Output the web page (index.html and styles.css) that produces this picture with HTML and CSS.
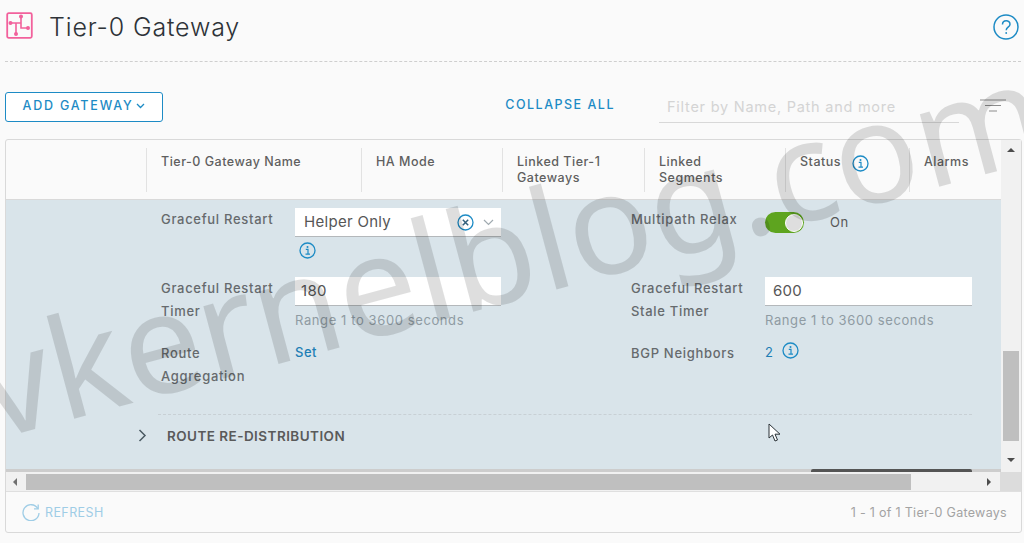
FILE: index.html
```html
<!DOCTYPE html>
<html lang="en">
<head>
<meta charset="utf-8">
<title>Tier-0 Gateway</title>
<link rel="stylesheet" href="styles.css">
</head>
<body>
<div class="page">
  <header class="title-bar">
    <div class="title-left">
      <svg class="logo" width="28" height="28" viewBox="0 0 28 28" fill="none" stroke="#f2619c" stroke-width="1.6">
        <rect x="1.2" y="1.2" width="24.6" height="24.6" rx="1.5" stroke-width="1.8"/>
        <path d="M4.500 11h10.500M10 11v11M15 4.500v11.500h7"/>
        <circle cx="4.500" cy="11" r="1.200" fill="#f2619c"/><circle cx="10" cy="22" r="1.200" fill="#f2619c"/><circle cx="15" cy="4.500" r="1.200" fill="#f2619c"/><circle cx="22" cy="16" r="1.200" fill="#f2619c"/>
      </svg>
      <h1 class="title">Tier-0 Gateway</h1>
    </div>
    <svg class="help" width="26" height="26" viewBox="0 0 26 26" fill="none" stroke="#1d8bc5" stroke-width="1.5">
      <circle cx="13" cy="13" r="12"/>
      <path d="M9.500 10.500c0-5 7.500-4.800 7.500-.3 0 3-3.800 3-3.800 6"/>
      <circle cx="13.200" cy="19" r=".9" fill="#1d8bc5" stroke="none"/>
    </svg>
  </header>

  <div class="toolbar">
    <button class="add-btn">ADD GATEWAY
      <svg width="9" height="6" viewBox="0 0 9 6" fill="none" stroke="#1d8bc5" stroke-width="1.3"><path d="M1 1l3.500 3.500L8 1"/></svg>
    </button>
    <div class="toolbar-right">
      <span class="collapse">COLLAPSE ALL</span>
      <div class="filter">Filter by Name, Path and more</div>
      <svg class="filter-icon" width="26" height="14" viewBox="0 0 26 14" stroke="#8c8c8c" stroke-width="1.2">
        <path d="M0 1h26M5 6.500h16M9 12h8"/>
      </svg>
    </div>
  </div>

  <section class="card">
    <div class="grid-area">
      <div class="grid-main">
        <div class="head">
          <div class="hcell c0"></div>
          <div class="hcell c1">Tier-0 Gateway Name</div>
          <div class="hcell c2">HA Mode</div>
          <div class="hcell c3">Linked Tier-1 Gateways</div>
          <div class="hcell c4">Linked Segments</div>
          <div class="hcell c5">Status
            <svg class="info status-info" width="17" height="17" viewBox="0 0 17 17"><use href="#i-info"/></svg>
          </div>
          <div class="hcell c6">Alarms</div>
        </div>
        <div class="detail">
          <div class="form">
            <div class="label">Graceful Restart</div>
            <div class="field">
              <div class="input select">
                <span>Helper Only</span>
                <svg class="clear" width="17" height="17" viewBox="0 0 17 17" fill="none">
                  <circle cx="8.500" cy="8.500" r="7.500" stroke="#1d8bc5" stroke-width="1.300"/>
                  <path d="M5.800 5.800l5.400 5.400M11.200 5.800l-5.400 5.400" stroke="#33607c" stroke-width="1.500"/>
                </svg>
                <svg width="11" height="7" viewBox="0 0 11 7" fill="none" stroke="#a0aab0" stroke-width="1.200"><path d="M1 1l4.500 4.500L10 1"/></svg>
              </div>
              <svg class="info under" width="17" height="17" viewBox="0 0 17 17"><use href="#i-info"/></svg>
            </div>
            <div class="label">Multipath Relax</div>
            <div class="field toggle-field">
              <div class="toggle"><span class="knob"></span></div>
              <span class="on">On</span>
            </div>

            <div class="label">Graceful Restart Timer</div>
            <div class="field">
              <div class="input">180</div>
              <div class="hint">Range 1 to 3600 seconds</div>
            </div>
            <div class="label">Graceful Restart Stale Timer</div>
            <div class="field">
              <div class="input">600</div>
              <div class="hint">Range 1 to 3600 seconds</div>
            </div>

            <div class="label">Route Aggregation</div>
            <div class="field link-field"><span class="link">Set</span></div>
            <div class="label">BGP Neighbors</div>
            <div class="field link-field"><span class="count">2</span>
              <svg class="info" width="17" height="17" viewBox="0 0 17 17"><use href="#i-info"/></svg>
            </div>
          </div>
          <div class="redist">
            <svg width="9" height="13" viewBox="0 0 9 13" fill="none" stroke="#4b5a63" stroke-width="1.500"><path d="M1.500 1l5.500 5.500L1.500 12"/></svg>
            <span>ROUTE RE-DISTRIBUTION</span>
          </div>
        </div>
        <div class="row-end"><span class="row-end-dark"></span></div>
      </div>
      <div class="vscroll">
        <span class="arrow up"></span>
        <span class="vthumb"></span>
        <span class="arrow down"></span>
      </div>
    </div>
    <div class="hscroll">
      <span class="arrow left"></span>
      <span class="hthumb"></span>
      <span class="arrow right"></span>
      <span class="corner"></span>
    </div>
    <footer class="foot">
      <div class="refresh">
        <svg width="18" height="18" viewBox="0 0 18 18" fill="none" stroke="#9fcde6" stroke-width="1.300">
          <path d="M15.800 5.500A8 8 0 1 0 17 10"/><path d="M12 5.800h4.200V1.500"/>
        </svg>
        <span>REFRESH</span>
      </div>
      <div class="count-text">1 - 1 of 1 Tier-0 Gateways</div>
    </footer>
  </section>
</div>

<svg class="defs" width="0" height="0">
  <symbol id="i-info" viewBox="0 0 17 17">
    <circle cx="8.500" cy="8.500" r="7.500" fill="none" stroke="#1d8bc5" stroke-width="1.300"/>
    <path d="M6.800 7.300h2.200v4.700M6.500 12.200h4.500" fill="none" stroke="#1d8bc5" stroke-width="1.200"/>
    <circle cx="8.500" cy="4.900" r="1" fill="#1d8bc5"/>
  </symbol>
</svg>

<svg class="cursor" width="14" height="20" viewBox="0 0 14 20">
  <path d="M1 1v14l3.500-3 2.500 6 2.500-1-2.500-5.800H12z" fill="#fff" stroke="#2b3338" stroke-width="1"/>
</svg>
<div class="watermark">vkernelblog.com</div>
</body>
</html>
```
FILE: styles.css
```css
* { box-sizing: border-box; }
html, body { margin: 0; height: 100%; }
body {
  background: #fafafa;
  color: #565656;
  font-family: Inter, "Open Sans", sans-serif;
  overflow: hidden;
  position: relative;
}
.page { width: 1024px; height: 543px; padding: 0 3px 0 5px; display: flex; flex-direction: column; }
.title-bar {
  height: 62px;
  flex: none;
  display: flex;
  justify-content: space-between;
  align-items: flex-start;
  padding: 12px 1px 0 1px;
  border-bottom: 1px dashed #cfcfcf;
}
.title-left { display: flex; align-items: center; gap: 15px; height: 28px; }
.title { margin: 2px 0 0; font-size: 25px; font-weight: 300; color: #2e3338; letter-spacing: .85px; line-height: 28px; }
.help { margin-top: 2px; margin-right: 1px; }
.toolbar {
  flex: none;
  height: 77px;
  padding-top: 30px;
  display: flex;
  justify-content: space-between;
  align-items: flex-start;
}
.add-btn {
  width: 158px;
  height: 30px;
  padding: 0 0 3px;
  border: 1px solid #1d8bc5;
  border-radius: 3px;
  background: #fff;
  color: #1d8bc5;
  font: 500 12.500px Inter, sans-serif;
  letter-spacing: 1.8px;
  display: flex;
  align-items: center;
  justify-content: center;
  gap: 3px;
}
.toolbar-right { display: flex; align-items: flex-start; }
.collapse { color: #1d8bc5; font-size: 12.500px; font-weight: 500; letter-spacing: 1.5px; margin-top: 5px; margin-right: 44px; }
.filter {
  width: 300px;
  height: 31px;
  padding: 6px 0 0 8px;
  border-bottom: 1px solid #d8d8d8;
  color: #d4d4d4;
  font-size: 14.500px;
  letter-spacing: .75px;
}
.filter-icon { margin: 7px 15px 0 21px; }
.card {
  flex: none;
  height: 394px;
  width: 1017px;
  border: 1px solid #d9d9d9;
  border-radius: 3px;
  display: flex;
  flex-direction: column;
  background: #fafafa;
}
.grid-area { display: flex; height: 332px; flex: none; }
.grid-main { flex: 1; min-width: 0; display: flex; flex-direction: column; }
.head {
  height: 60px;
  flex: none;
  display: flex;
  padding-top: 8px;
  border-bottom: 1px solid #d9d9d9;
  font-size: 12.500px;
  font-weight: 500;
  letter-spacing: .5px;
  line-height: 16px;
  color: #5f5f5f;
}
.hcell { height: 44px; padding: 6px 0 0 14px; border-left: 1px solid #e2e2e2; position: relative; }
.c0 { width: 140px; border-left: 0; }
.c1 { width: 215px; }
.c2 { width: 141px; }
.c3 { width: 142px; padding-right: 20px; }
.c4 { width: 141px; padding-right: 30px; }
.c5 { width: 124px; }
.c6 { width: 70px; overflow: visible; }
.status-info { position: absolute; left: 66px; top: 7px; }
.info { display: block; flex: none; }
.detail { flex: 1; background: #d9e4ea; padding: 8px 29px 0 152px; display: flex; flex-direction: column; }
.form {
  display: grid;
  grid-template-columns: 134px 206px 130px 134px 207px;
  grid-template-rows: 69px 65px 72px;
  padding-left: 3px;
  border-bottom: 1px dashed #c8d0d5;
}
.form .label:nth-child(4n+3) { grid-column: 4; }
.label { font-size: 13px; font-weight: 500; letter-spacing: .7px; line-height: 23px; color: #666a6d; padding-right: 14px; }
.field { min-width: 0; }
.input {
  height: 29px;
  background: #fff;
  border-bottom: 1px solid #b4b8bb;
  padding: 0 9px;
  font-size: 15px;
  letter-spacing: .3px;
  line-height: 28px;
  color: #565656;
  font-weight: 400;
}
.form > .field:nth-child(n+5) .input { padding-left: 6px; }
.form > .field:nth-child(8) .input { padding-left: 8px; }
.select { display: flex; align-items: center; gap: 6px; padding-right: 7px; }
.select span { flex: 1; }
.clear { margin-right: 3px; }
.under { margin: 5px 0 0 4px; }
.hint { font-size: 13px; letter-spacing: .6px; color: #8f9ba3; line-height: 18px; margin-top: 5px; }
.toggle-field { display: flex; align-items: flex-start; padding-top: 4px; gap: 26px; }
.toggle { width: 39px; height: 21px; border-radius: 11px; background: #5ea41f; position: relative; }
.knob { position: absolute; right: 1px; top: 1.500px; width: 18px; height: 18px; border-radius: 50%; background: #dedede; border: 1px solid #fff; }
.on { font-size: 13px; letter-spacing: .5px; line-height: 21px; }
.link-field { display: flex; align-items: flex-start; gap: 9px; line-height: 18px; }
.link, .count { font-size: 13px; line-height: 20px; font-weight: 500; color: #1d7eb5; letter-spacing: .5px; }
.count { font-weight: 400; }
.redist { display: flex; align-items: center; height: 41px; gap: 20px; margin-left: -20px; font-size: 13.500px; font-weight: 600; letter-spacing: .45px; color: #5a5a5a; }
.row-end { height: 3px; background: #cdcdcd; flex: none; display: flex; justify-content: flex-end; padding-right: 29px; }
.row-end-dark { width: 161px; height: 3px; background: #555; border-radius: 2px 2px 0 0; }
.vscroll { width: 20px; flex: none; background: #f1f1f1; position: relative; }
.vthumb { position: absolute; left: 2px; top: 211px; width: 16px; height: 90px; background: #bfbfbf; }
.arrow { position: absolute; width: 0; height: 0; border-style: solid; border-color: transparent; }
.up { left: 6px; top: 8px; border-width: 0 4px 4px; border-bottom-color: #4c4c4c; }
.down { left: 6px; top: 318px; border-width: 4px 4px 0; border-top-color: #4c4c4c; }
.hscroll { height: 20px; flex: none; background: #f1f1f1; position: relative; border-bottom: 1px solid #dfdfdf; }
.hthumb { position: absolute; left: 20px; top: 2px; width: 885px; height: 16px; background: #bfbfbf; }
.left { left: 7px; top: 6px; border-width: 4px 4px 4px 0; border-right-color: #707070; }
.right { left: 981px; top: 6px; border-width: 4px 0 4px 4px; border-left-color: #4c4c4c; }
.corner { position: absolute; right: 0; top: 0; width: 21px; height: 19px; background: #dcdcdc; }
.foot { flex: 1; display: flex; align-items: center; justify-content: space-between; padding: 0 14px 0 16px; }
.refresh { display: flex; align-items: center; gap: 5px; color: #9fcde6; font-size: 12.500px; letter-spacing: .4px; }
.count-text { color: #a3a3a3; font-size: 12.500px; letter-spacing: .3px; }
.defs { position: absolute; }
.cursor { position: absolute; left: 768px; top: 423px; }
.watermark {
  position: absolute;
  left: 2px;
  top: 300px;
  font-family: "Noto Sans", sans-serif;
  font-size: 140px;
  line-height: 170px;
  white-space: nowrap;
  color: rgba(0, 0, 0, .13);
  transform: rotate(-15deg);
  transform-origin: 0 100%;
  pointer-events: none;
}
```
